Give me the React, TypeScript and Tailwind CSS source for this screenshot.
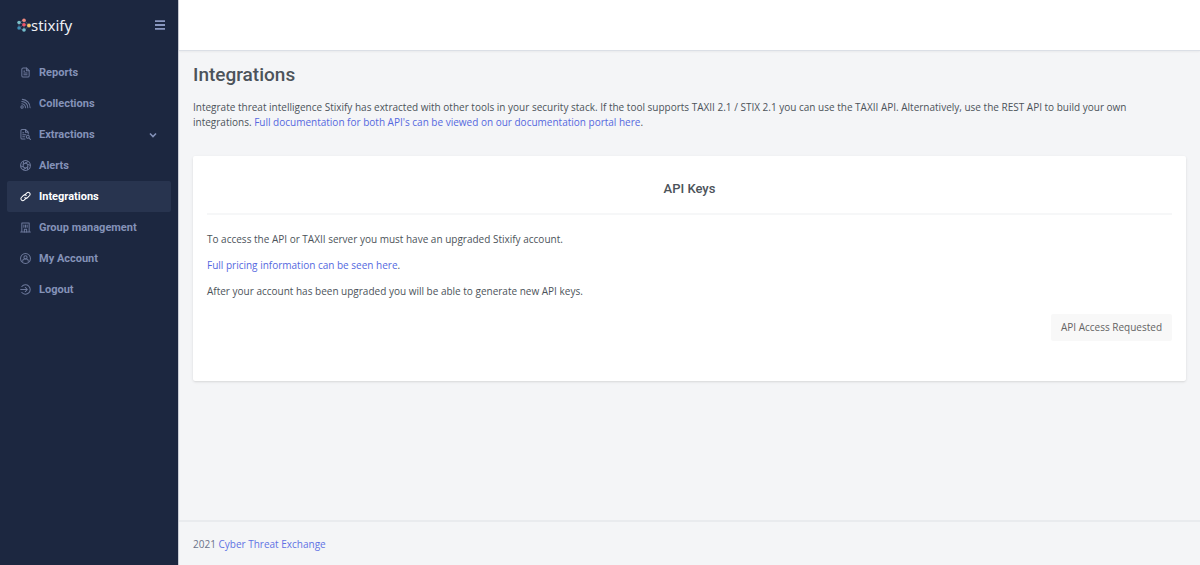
import React from "react";
import type { ReactNode } from "react";

function Icon({ children }: { children: ReactNode }) {
  return (
    <svg
      viewBox="0 0 24 24"
      className="size-[11px] shrink-0"
      fill="none"
      stroke="currentColor"
      strokeWidth="2.2"
      strokeLinecap="round"
      strokeLinejoin="round"
      aria-hidden="true"
    >
      {children}
    </svg>
  );
}

const icons = {
  reports: (
    <>
      <path d="M14 2H7a3 3 0 0 0-3 3v14a3 3 0 0 0 3 3h10a3 3 0 0 0 3-3V8z" />
      <path d="M14 2v6h6M8.500 9h1.500M8.500 13h7M8.500 17h7" />
    </>
  ),
  collections: (
    <>
      <circle cx="4.500" cy="19.500" r="2.600" />
      <path d="M4 12.500a8.500 8.500 0 0 1 8 9M4 7.500a13 13 0 0 1 13 14M5 3a18 18 0 0 1 17 18" />
    </>
  ),
  extractions: (
    <>
      <path d="M11 22H5a3 3 0 0 1-3-3V4a3 3 0 0 1 3-3h7l6 6v4M12 1v6h6" />
      <path d="M6 8h2M6 12.500h7M6 17h4" />
      <circle cx="17" cy="17" r="3.200" />
      <path d="M19.500 19.500l3.500 3.500" />
    </>
  ),
  alerts: (
    <>
      <circle cx="12" cy="12" r="10.800" />
      <path d="M12 6.500l5 3v5.500l-5 3-5-3V9.500z" />
      <path d="M12 6.500l5-3M17 9.500l5 2M17 15l-1 6M12 18l-5 3M7 15l-5-2M7 9.500l1-6" />
    </>
  ),
  integrations: (
    <>
      <path d="M10.500 8.500l4.600-4.600a4.200 4.200 0 0 1 5.900 5.900l-4.600 4.600a4.200 4.200 0 0 1-5.900 0" />
      <path d="M13.500 15.500l-4.600 4.600A4.200 4.200 0 0 1 3 14.200l4.600-4.600a4.200 4.200 0 0 1 5.900 0" />
    </>
  ),
  group: (
    <>
      <path d="M4 22V2h16v20M1.500 22h21" />
      <path d="M9.500 22v-6h5v6M8.500 6.500v5M12 6.500v5M15.500 6.500v5" />
    </>
  ),
  account: (
    <>
      <circle cx="12" cy="12" r="10.800" />
      <circle cx="12" cy="9.500" r="3.500" />
      <path d="M6 18v-1a4 4 0 0 1 4-4h4a4 4 0 0 1 4 4v1" />
    </>
  ),
  logout: (
    <>
      <path d="M4 5.500a10.300 10.300 0 1 1 0 13" />
      <path d="M1.500 12H16M11.500 7.500L16 12l-4.500 4.500" />
    </>
  ),
};

const items: { label: string; icon: ReactNode; active?: boolean; expandable?: boolean }[] = [
  { label: "Reports", icon: icons.reports },
  { label: "Collections", icon: icons.collections },
  { label: "Extractions", icon: icons.extractions, expandable: true },
  { label: "Alerts", icon: icons.alerts },
  { label: "Integrations", icon: icons.integrations, active: true },
  { label: "Group management", icon: icons.group },
  { label: "My Account", icon: icons.account },
  { label: "Logout", icon: icons.logout },
];

function LogoMark() {
  return (
    <svg viewBox="0 0 28 28" className="size-3.5" aria-hidden="true">
      <path
        d="M4 9L14 4v9L4 9v11l10 5V13l10 2-10 10M4 20l10-7M14 4l10 11"
        fill="none"
        stroke="#59647f"
        strokeWidth="1.5"
      />
      <circle cx="4" cy="9" r="3.500" fill="#7cc0c8" />
      <circle cx="14" cy="4.500" r="3.600" fill="#f08a80" />
      <circle cx="14" cy="13.500" r="3.600" fill="#ef5366" />
      <circle cx="24" cy="15" r="3.800" fill="#f6c46a" />
      <circle cx="4" cy="20" r="3.500" fill="#3e8fb5" />
      <circle cx="14" cy="24" r="3.600" fill="#73bdcb" />
    </svg>
  );
}

function Sidebar() {
  return (
    <aside className="w-[179px] shrink-0 border-r border-[#c9ccd5] bg-[#1c2740]">
      <div className="flex h-[50px] items-center justify-between pr-3 pl-[17px]">
        <a
          href="#"
          className="flex items-center font-['Noto_Sans','Open_Sans',sans-serif] text-[15px] leading-5 text-[#eef0f4]"
        >
          <LogoMark />
          stixify
        </a>
        <button type="button" aria-label="Toggle menu" className="text-[#8a98c0]">
          <svg viewBox="0 0 12 12" className="size-3" fill="currentColor" aria-hidden="true">
            <path d="M1 1.200h10v1.800H1zM1 5.100h10v1.800H1zM1 9h10v1.800H1z" />
          </svg>
        </button>
      </div>
      <nav className="px-[7px] pt-[7px]">
        <ul>
          {items.map((item) => (
            <li key={item.label}>
              <a
                href="#"
                className={
                  item.active
                    ? "flex h-[31px] items-center gap-2 rounded-xs bg-[#28344f] pr-3 pl-[13px] text-white"
                    : "flex h-[31px] items-center gap-2 rounded-xs pr-3 pl-[13px] text-[#8492b8]"
                }
              >
                <span className={item.active ? "text-white" : "text-[#6c789a]"}>
                  <Icon>{item.icon}</Icon>
                </span>
                <span className="flex-1 font-['Roboto','Noto_Sans',sans-serif] text-[11px] font-bold">
                  {item.label}
                </span>
                {item.expandable && (
                  <svg
                    viewBox="0 0 12 12"
                    className="size-3"
                    fill="none"
                    stroke="currentColor"
                    strokeWidth="1.6"
                    aria-hidden="true"
                  >
                    <path d="M3 4.500l3 3 3-3" />
                  </svg>
                )}
              </a>
            </li>
          ))}
        </ul>
      </nav>
    </aside>
  );
}

export default function App() {
  return (
    <div className="flex min-h-screen bg-[#f4f5f7] font-['Open_Sans','Noto_Sans',sans-serif] text-[10px] leading-[15px] text-[#4c535a]">
      <Sidebar />
      <div className="flex min-w-0 flex-1 flex-col">
        <header className="h-[51px] border-b border-[#dbdfe6] bg-white shadow-xs" />
        <main className="flex-1 px-3.5 pt-3">
          <h1 className="font-['Roboto','Noto_Sans',sans-serif] text-[19px] leading-6 font-medium">Integrations</h1>
          <p className="pt-[13px]">
            Integrate threat intelligence Stixify has extracted with other tools in your security stack. If the tool
            supports TAXII 2.1 / STIX 2.1 you can use the TAXII API. Alternatively, use the REST API to build your own
            integrations.{" "}
            <a href="#" className="text-[#5468e0]">
              Full documentation for both API's can be viewed on our documentation portal here
            </a>
            .
          </p>
          <section className="mt-[26px] rounded-xs bg-white px-3.5 pt-6 pb-10 shadow-sm">
            <h2 className="border-b-2 border-[#f6f7f8] pb-[15px] text-center font-['Roboto','Noto_Sans',sans-serif] text-[13px] leading-[18px] font-medium">
              API Keys
            </h2>
            <div className="space-y-[11px] pt-[17px]">
              <p>To access the API or TAXII server you must have an upgraded Stixify account.</p>
              <p>
                <a href="#" className="text-[#5468e0]">
                  Full pricing information can be seen here
                </a>
                .
              </p>
              <p>After your account has been upgraded you will be able to generate new API keys.</p>
            </div>
            <div className="flex justify-end pt-[15px]">
              <button type="button" className="h-[27px] rounded-xs bg-[#f8f8f8] px-2.5 text-[#646464]">
                API Access Requested
              </button>
            </div>
          </section>
        </main>
        <footer className="border-t-2 border-[#e9ebee] px-3.5 pt-[15px] pb-[13px] text-[#6b7389]">
          2021{" "}
          <a href="#" className="text-[#5f72e4]">
            Cyber Threat Exchange
          </a>
        </footer>
      </div>
    </div>
  );
}
